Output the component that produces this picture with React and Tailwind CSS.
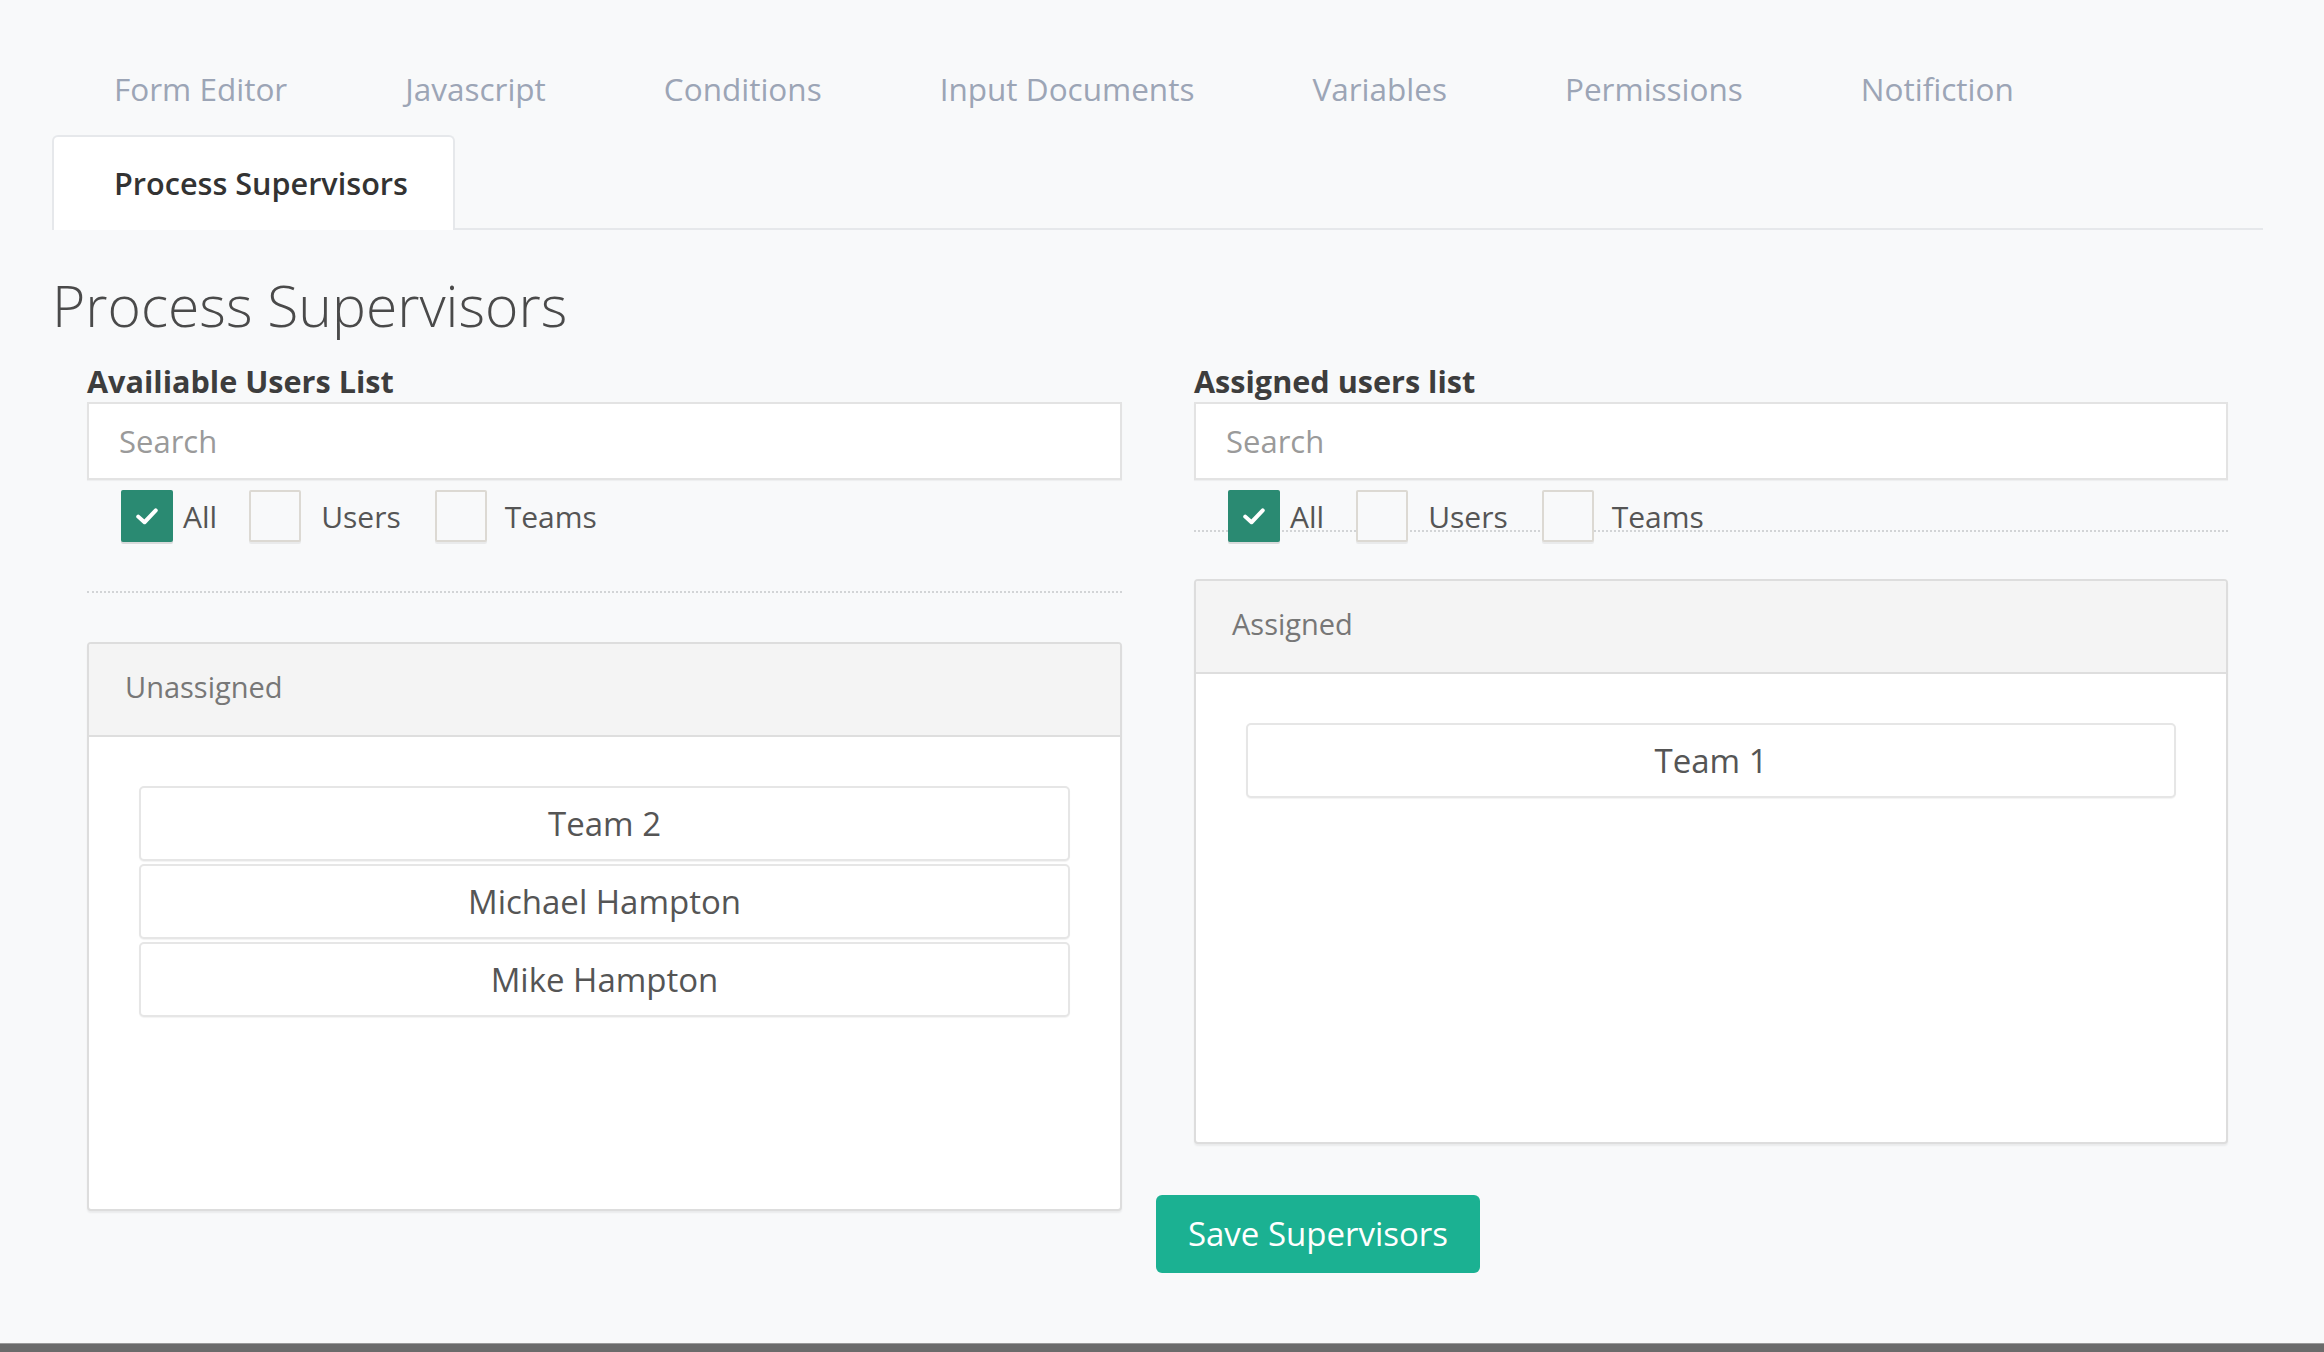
import React from 'react'

const TABS = ['Form Editor', 'Javascript', 'Conditions', 'Input Documents', 'Variables', 'Permissions', 'Notifiction']

function Check({ checked }) {
  return (
    <span className={`flex items-center justify-center w-[52px] h-[52px] rounded-[2px] ${checked ? 'bg-[#2a8a72] shadow-[0_2px_0_rgba(0,0,0,0.12)]' : 'bg-[#f8f9fa] border-2 border-[#dcd9d3] shadow-[0_2px_0_rgba(0,0,0,0.06)]'}`}>
      {checked && (
        <svg width="30" height="30" viewBox="0 0 24 24" fill="none" stroke="white" strokeWidth="3.2" strokeLinecap="round" strokeLinejoin="round">
          <polyline points="5,12.5 10,17 19,7.5" />
        </svg>
      )}
    </span>
  )
}

function Filters() {
  return (
    <div className="flex items-center pl-[34px] text-[30px] text-[#555]">
      <Check checked />
      <span className="ml-[10px]">All</span>
      <span className="ml-[32px]"><Check /></span>
      <span className="ml-[20px]">Users</span>
      <span className="ml-[34px]"><Check /></span>
      <span className="ml-[18px]">Teams</span>
    </div>
  )
}

function Panel({ title, items, className }) {
  return (
    <div className={`bg-white border-2 border-[#dddddd] rounded-[4px] shadow-[0_2px_2px_rgba(0,0,0,0.06)] overflow-hidden ${className || ''}`}>
      <div className="h-[93px] flex items-center pl-[36px] pb-[6px] bg-[#f4f4f4] border-b-2 border-[#dedede] text-[29px] text-[#777]">
        {title}
      </div>
      <div className="px-[50px] pt-[49px] flex flex-col gap-[3px]">
        {items.map(name => (
          <div key={name}
            className="h-[75px] flex items-center justify-center bg-white border-2 border-[#e6e6e6] rounded-[5px] shadow-[0_1px_1px_rgba(0,0,0,0.05)] text-[33px] text-[#555]">
            {name}
          </div>
        ))}
      </div>
    </div>
  )
}

function SearchBox() {
  return (
    <input
      placeholder="Search"
      className="mt-[3px] w-full h-[78px] bg-white border-2 border-[#e3e3e3] px-[30px] text-[31px] text-[#555] placeholder:text-[#9a9a9a] outline-none shadow-[0_1px_1px_rgba(0,0,0,0.04)]"
    />
  )
}

export default function App() {
  return (
    <div className="min-h-screen flex flex-col bg-[#f8f9fa] font-['Open_Sans',sans-serif]">
      <div className="flex-1 pt-[42px] pl-[52px] pr-[61px]">
        {/* Tabs */}
        <div className="flex flex-wrap border-b-2 border-[#e6e8eb]">
          {TABS.map(t => (
            <div key={t} className="h-[93px] flex items-center border-2 border-transparent pl-[60px] pr-[54px] text-[31.5px] text-[#9ca5b6]">
              {t}
            </div>
          ))}
          <div className="h-[95px] -mb-[2px] w-[403px] flex items-center bg-white border-2 border-b-0 border-[#e6e8eb] rounded-t-[6px] pl-[60px] text-[30.6px] font-semibold text-[#333]">
            Process Supervisors
          </div>
        </div>

        <h1 className="mt-[42px] text-[57px] leading-[66px] font-light text-[#4a4a4a]">Process Supervisors</h1>

        <div className="flex gap-[72px] pl-[35px]">
          {/* Available */}
          <div className="w-[1035px]">
            <label className="block mt-[25px] text-[30.6px] leading-[36px] font-bold text-[#3d3d3d]">Availiable Users List</label>
            <SearchBox />
            <div className="mt-[10px]">
              <Filters />
            </div>
            <div className="mt-[49px] border-t-2 border-dotted border-[#d2d4d6]" />
            <Panel className="mt-[49px] h-[569px]" title="Unassigned" items={['Team 2', 'Michael Hampton', 'Mike Hampton']} />
          </div>

          {/* Assigned */}
          <div className="w-[1034px]">
            <label className="block mt-[25px] text-[30.6px] leading-[36px] font-bold text-[#3d3d3d]">Assigned users list</label>
            <SearchBox />
            <div className="mt-[10px] h-[42px] border-b-2 border-dotted border-[#d2d4d6]">
              <Filters />
            </div>
            <Panel className="mt-[47px] h-[565px]" title="Assigned" items={['Team 1']} />
            <button className="mt-[51px] -ml-[38px] w-[324px] h-[78px] rounded-[6px] bg-[#1bb192] text-white text-[33px]">
              Save Supervisors
            </button>
          </div>
        </div>
      </div>
      <div className="h-[9px] bg-[#6b6b6b] border-t border-[#9a9a9a]" />
    </div>
  )
}
